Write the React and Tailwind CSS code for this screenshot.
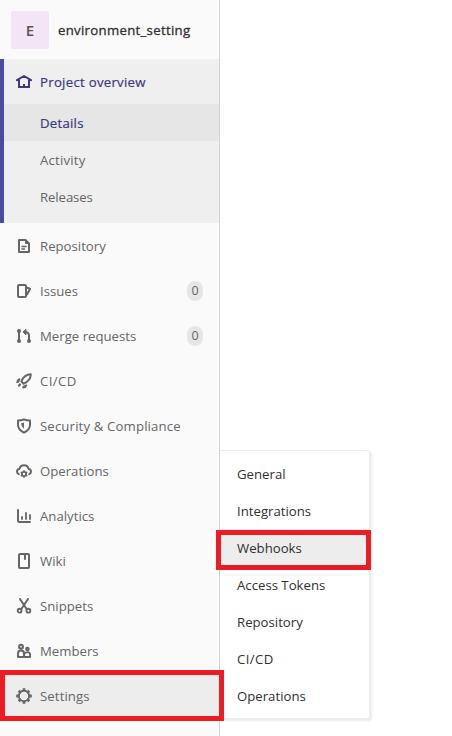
import React from "react";

function Icon({ children }) {
  return (
    <svg
      viewBox="0 0 16 16"
      className="mr-2 size-4 shrink-0"
      fill="none"
      stroke="currentColor"
      strokeWidth="2"
      strokeLinejoin="round"
      strokeLinecap="round"
    >
      {children}
    </svg>
  );
}

const icons = {
  home: (
    <>
      <path d="M1 6.2 8 2l7 4.2" />
      <path d="M3 6.2V13h10V6.2" strokeLinejoin="miter" />
      <path d="M8 10v3" strokeLinecap="butt" />
    </>
  ),
  doc: (
    <>
      <path d="M3 2h6.5L13 5.5V14H3z" />
      <path d="M9.5 2v3.5H13z" strokeWidth="1" fill="currentColor" />
      <path d="M6 8.5h4M6 11h2.4" strokeWidth="1.5" />
    </>
  ),
  issues: (
    <>
      <rect x="2" y="2" width="8" height="12" rx="1" />
      <path d="M10.5 4.5l3.6 1.2-2.9 5.5" strokeWidth="2" />
    </>
  ),
  merge: (
    <>
      <path d="M3 3v10M13 13V7.5C13 5.3 11.5 4 8.5 4" />
      <path d="M9.6 1.4 7 4l2.6 2.6z" fill="currentColor" strokeWidth="1" />
      <circle cx="3" cy="3" r="1.3" fill="currentColor" strokeWidth="1.4" />
      <circle cx="3" cy="13" r="1.3" fill="currentColor" strokeWidth="1.4" />
      <circle cx="13" cy="13" r="1.3" fill="currentColor" strokeWidth="1.4" />
    </>
  ),
  rocket: (
    <>
      <path d="M14.8 1.2C10.6 1.3 7.4 3.5 5.3 8.4l2.3 2.3c5-2.2 7.1-5.3 7.2-9.5z" strokeWidth="2" />
      <path d="M1 9.4c.4-2.2 1.5-3.4 2.6-3.5L2.4 9zM7 14.8c2.2-.4 3.2-1.5 3.5-2.6L7.4 13.4z" fill="currentColor" strokeWidth="1.5" />
      <path d="M3.9 11.3 3 12.6" strokeWidth="2.2" />
    </>
  ),
  shield: (
    <>
      <path d="M8 1.4c2 .9 3.9 1.2 6 1.2v4.2c0 3.4-2.2 6-6 7.9-3.8-1.9-6-4.5-6-7.9V2.6c2.1 0 4-.3 6-1.2z" strokeWidth="2" />
      <path d="M8 4.4v6C6.2 9.2 5.2 7.8 5.2 5.2 6.3 5.1 7.1 4.8 8 4.4z" fill="currentColor" stroke="none" />
    </>
  ),
  cloud: (
    <>
      <path d="M2.8 11.2C1.6 10.7 1 9.8 1 8.6 1 7 2.1 6 3.5 5.9 4 3.7 5.7 2.2 8 2.2s4 1.5 4.5 3.7C13.9 6 15 7 15 8.6c0 1.2-.6 2.1-1.8 2.6" strokeWidth="2" />
      <circle cx="8" cy="11" r="2.1" strokeWidth="1.8" />
      <path d="M8 7.8v.7M8 13.5v.7M5.2 9.4l.6.3M10.2 12.3l.6.3M5.2 12.6l.6-.3M10.2 9.7l.6-.3" strokeWidth="1.5" />
    </>
  ),
  chart: (
    <>
      <path d="M2 2v11a1 1 0 0 0 1 1h11" />
      <path d="M6 9v2M10 5v6M14 7v4" strokeWidth="1.8" />
    </>
  ),
  book: (
    <>
      <rect x="3" y="1" width="10" height="14" rx="1" />
      <path d="M9 2v4.8" strokeWidth="2" strokeLinecap="butt" />
    </>
  ),
  scissors: (
    <>
      <path d="M4 1l6.6 10M12 1 5.4 11" strokeWidth="2" />
      <circle cx="3.6" cy="12.7" r="1.9" strokeWidth="1.9" />
      <circle cx="12.4" cy="12.7" r="1.9" strokeWidth="1.9" />
    </>
  ),
  members: (
    <>
      <circle cx="5" cy="3.7" r="1.9" strokeWidth="2.1" />
      <path d="M2 14v-3.3C2 8.7 3.2 7.5 5 7.5s3 1.2 3 3.2V14z" strokeWidth="2" />
      <circle cx="11.4" cy="6" r="1.3" strokeWidth="2" />
      <path d="M8.4 14h5.7v-2.3c0-1.6-1.1-2.6-2.6-2.6-1.1 0-2 .4-2.6 1.3" strokeWidth="1.9" />
    </>
  ),
  gear: (
    <>
      <circle cx="8" cy="8" r="5.2" strokeWidth="1.9" />
      <path
        d="M8 .2v2.6M8 13.2v2.6M.2 8h2.6M13.2 8h2.6M2.7 2.7l1.6 1.6M11.7 11.7l1.6 1.6M2.7 13.3l1.6-1.6M11.7 4.3l1.6-1.6"
        strokeWidth="2.8"
        strokeLinecap="butt"
      />
    </>
  ),
};

const items = [
  { icon: "doc", label: "Repository" },
  { icon: "issues", label: "Issues", count: 0 },
  { icon: "merge", label: "Merge requests", count: 0 },
  { icon: "rocket", label: "CI/CD", spacing: "tracking-[0.4px]" },
  { icon: "shield", label: "Security & Compliance", spacing: "tracking-[0.14px]" },
  { icon: "cloud", label: "Operations" },
  { icon: "chart", label: "Analytics" },
  { icon: "book", label: "Wiki" },
  { icon: "scissors", label: "Snippets" },
  { icon: "members", label: "Members" },
  { icon: "gear", label: "Settings", active: true, spacing: "tracking-[0.1px]" },
];

const settingsMenu = ["General", "Integrations", "Webhooks", "Access Tokens", "Repository", "CI/CD", "Operations"];

export default function App() {
  return (
    <div className="relative h-[736px] w-[452px] overflow-hidden bg-white font-['Open_Sans','Noto_Sans',sans-serif] text-[13.2px] leading-5 text-[#666]">
      <aside className="flex h-full w-[220px] flex-col border-r border-[#d3d3d3] bg-[#fafafa]">
        <header className="flex h-[59px] shrink-0 items-center pl-[11px]">
          <div className="mr-[9px] flex size-[38px] items-center justify-center rounded-[3px] bg-[#f3e5f5] text-[15px] font-semibold text-[#555]">
            E
          </div>
          <span className="text-[13.2px] tracking-[0.3px] text-[#303030] [-webkit-text-stroke:0.3px_#303030]">
            environment_setting
          </span>
        </header>

        <section className="shrink-0 border-l-4 border-[#4b4ba3] bg-[#efefef] pb-2 text-[#393982]">
          <div className="flex h-[45px] items-center pl-3 tracking-[0.28px] [-webkit-text-stroke:0.2px_#393982]">
            <Icon>{icons.home}</Icon>
            Project overview
          </div>
          <div className="flex h-[37px] items-center bg-[#e6e6e6] pl-9 tracking-[0.25px] [-webkit-text-stroke:0.2px_#393982]">
            Details
          </div>
          <div className="flex h-[37px] items-center pl-9 tracking-[0.2px] text-[#666]">Activity</div>
          <div className="flex h-[37px] items-center pl-9 tracking-[-0.1px] text-[#666]">Releases</div>
        </section>

        <nav>
          {items.map((item) => (
            <div
              key={item.label}
              className={`flex h-[45px] items-center pr-4 pl-4 ${item.spacing || ""} ${item.active ? "bg-[#ededed]" : ""}`}
            >
              <Icon>{icons[item.icon]}</Icon>
              {item.label}
              {item.count !== undefined && (
                <span className="ml-auto flex h-5 w-4 items-center justify-center rounded-full bg-[#e6e6e6] pt-px text-[12.5px]">
                  {item.count}
                </span>
              )}
            </div>
          ))}
        </nav>
      </aside>

      <div className="absolute top-[450px] left-[220px] h-[269px] w-[150px] rounded-r-[3px] border-t border-r border-b border-[#ececec] bg-white pt-1 text-[#303030] shadow-[2px_2px_2px_rgba(0,0,0,0.08)]">
        {settingsMenu.map((label) => (
          <div
            key={label}
            className={`flex h-[37px] items-center pl-[17px] ${label === "Webhooks" ? "bg-[#ededed]" : ""} ${label === "CI/CD" ? "tracking-[0.4px]" : ""}`}
          >
            {label}
          </div>
        ))}
      </div>

      <div className="absolute top-[530px] left-[216px] h-10 w-[155px] border-5 border-[#ed1c24]" />
      <div className="absolute top-[670px] left-0 h-[51px] w-[224px] border-5 border-[#ed1c24]" />
    </div>
  );
}
